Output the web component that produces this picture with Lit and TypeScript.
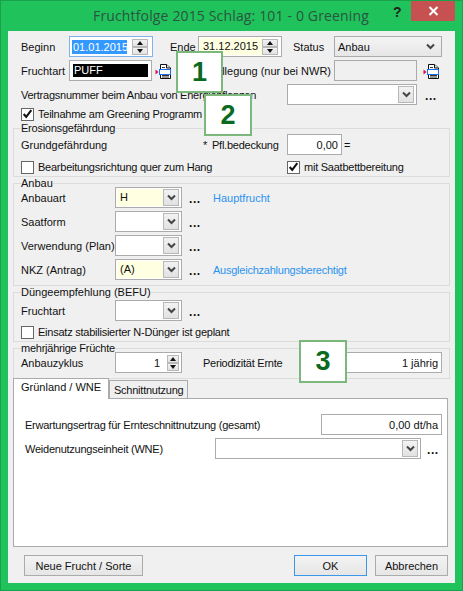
import { LitElement, html, css, svg } from "lit";
import { customElement } from "lit/decorators.js";

const chevron = svg`<svg width="9" height="7" viewBox="0 0 9 7"><path d="M1 1.5 L4.5 5 L8 1.5" fill="none" stroke="#444" stroke-width="2"/></svg>`;
const docIcon = html`<svg class="doc" width="17" height="17" viewBox="0 0 17 17">
  <path d="M5.5 1.5 H11.5 L15.5 5 V15.5 H5.5 Z" fill="#fff" stroke="#111"/>
  <path d="M11.5 1.5 V5 H15.5" fill="#ddd" stroke="#111"/>
  <path d="M7 4.5 H10 M7 12.5 H14 M7 14 H14" stroke="#333"/>
  <rect x="4.5" y="6.5" width="11" height="5" fill="#fff" stroke="#1a6ff0"/>
  <path d="M0.5 6.5 L3.5 9 L0.5 11.5 Z" fill="#e0103a"/>
</svg>`;
const check = html`<svg width="13" height="12" viewBox="0 0 13 12"><path d="M2 6 L5 9.5 L11 1.5" fill="none" stroke="#111" stroke-width="2.4"/></svg>`;

@customElement("app-root")
export class AppRoot extends LitElement {
  static styles = css`
    :host { display: block; width: 463px; height: 591px; overflow: hidden; font: 11px/14px "Liberation Sans", Arial, sans-serif; color: #111; }
    * { box-sizing: border-box; }
    .window { position: relative; width: 463px; height: 591px; background: #20c25c; border: 1px solid #17a34b; display: flex; flex-direction: column; }
    .titlebar { height: 30px; flex: none; display: flex; position: relative; }
    .title { position: absolute; left: 92px; top: 6px; font: 14px/18px "Open Sans", sans-serif; color: #2a5540; white-space: nowrap; letter-spacing: 0.15px; }
    .help { position: absolute; left: 392px; top: 1px; font: bold 14px/20px "Liberation Sans", sans-serif; color: #222; }
    .close { position: absolute; left: 410px; top: 0; width: 44px; height: 20px; background: #c75050; display: flex; align-items: center; justify-content: center; }
    .client { margin: 0 7px 7px; flex: 1; background: #f0f0f0; padding: 5px 0 0 0; display: flex; flex-direction: column; }
    .row { display: flex; align-items: center; height: 21px; white-space: nowrap; }
    .top { padding-left: 13px; margin-bottom: 3px; }
    .lab { flex: none; }
    .tight { letter-spacing: -0.24px; }
    .w48 { width: 48px; } .w28 { width: 28px; } .w41 { width: 41px; } .w266 { width: 266px; } .w94 { width: 94px; }
    .ml17 { margin-left: 17px; } .ml11 { margin-left: 11px; }
    .field { flex: none; height: 21px; border: 1px solid #ababab; background: #fff; display: flex; align-items: center; padding: 0 3px; }
    .f84 { width: 84px; } .f83 { width: 83px; } .f108 { width: 108px; } .f130 { width: 130px; } .f67 { width: 67px; } .f55 { width: 55px; } .f121 { width: 121px; } .f206 { width: 206px; } .f102 { width: 102px; }
    .right { justify-content: flex-end; }
    .off { background: #f0f0f0; }
    .focus { border-color: #7eb4ea; padding: 0 2px; }
    .yellow { background: #ffffe1; }
    .black { background: #000; color: #fff; height: 13px; width: 75px; padding-left: 1px; line-height: 13px; }
    .sel { background: #3399ff; color: #fff; height: 14px; line-height: 14px; width: 55px; padding-left: 1px; }
    .val { flex: 1; min-width: 0; height: 17px; line-height: 17px; }
    .combo { padding: 1px; }
    .combo .val { height: 17px; padding-left: 3px; }
    .combo.yl .val { background: #ffffe1; }
    .arrow { flex: none; width: 16px; height: 17px; border: 1px solid #b8b8b8; background: linear-gradient(#f2f2f2, #e2e2e2); display: flex; align-items: center; justify-content: center; margin-right: 1px; }
    .dropdown { background: linear-gradient(#f4f4f4, #e6e6e6); justify-content: space-between; padding: 0 3px; }
    .dropdown svg { margin-right: 3px; }
    .spin { flex: none; width: 16px; height: 16px; margin: 0 2px 0 auto; display: flex; flex-direction: column; }
    .spin div { flex: 1; border: 1px solid #b8b8b8; background: linear-gradient(#f2f2f2, #e2e2e2); display: flex; align-items: center; justify-content: center; }
    .f67 .spin { width: 12px; margin-right: 1px; }
    .tri-up { width: 0; height: 0; border: 3px solid transparent; border-top: 0; border-bottom: 4px solid #111; }
    .tri-dn { width: 0; height: 0; border: 3px solid transparent; border-bottom: 0; border-top: 4px solid #111; }
    .spinnum { flex: 1; text-align: right; padding-right: 7px; }
    .doc { flex: none; margin: 2px 0 0 3px; }
    .stil { width: 162px; text-align: right; flex: none; padding-right: 3px; }
    .doc2 { margin-left: 3px; display: flex; }
    .dots { flex: none; width: 11px; font-weight: bold; font-size: 12px; margin-left: 7px; letter-spacing: 0.6px; position: relative; top: 1px; line-height: 12px; }
    .d8 { margin-left: 8px; } .d6 { margin-left: 6px; }
    .cb { display: flex; align-items: center; height: 14px; white-space: nowrap; flex: none; }
    .box { width: 13px; height: 13px; flex: none; border: 1px solid #666; background: #fff; margin-right: 4px; display: flex; align-items: center; justify-content: center; }
    .cbtop { margin: -1px 0 0 13px; }
    .group { margin: 0 0 0 5px; width: 437px; border: 1px solid #dcdcdc; padding: 0 7px; flex: none; }
    .legend { margin-top: -7px; height: 13px; line-height: 13px; width: fit-content; background: #f0f0f0; }
    .g1 { margin-top: 7px; height: 49px; }
    .g2 { margin-top: 6px; height: 103px; }
    .g3 { margin-top: 6px; height: 50px; }
    .g4 { margin-top: 6px; height: 31px; }
    .g1 .legend + .row { margin-top: -1px; }
    .g1 .cbrow { height: 14px; margin-top: 5px; }
    .g2 .legend + .row { margin-top: -3px; }
    .g2 .row + .row { margin-top: 3px; }
    .g3 .legend + .row { margin-top: 1px; }
    .g3 .cb { margin-top: 4px; }
    .g4 .legend + .row { margin-top: -3px; }
    .w182 { width: 182px; } .w9 { width: 9px; } .w75 { width: 75px; }
    .eq { margin-left: 2px; }
    .link { color: #2b93f0; margin-left: 13px; }
    .per { width: 137px; margin-left: 21px; }
    .tabs { display: flex; align-items: flex-end; height: 21px; margin: -1px 0 -1px 5px; flex: none; position: relative; z-index: 1; white-space: nowrap; }
    .tab { height: 19px; border: 1px solid #ababab; padding: 0 4px; line-height: 17px; background: #f0f0f0; }
    .tab.on { height: 21px; width: 96px; background: #fff; border-bottom: 0; line-height: 17px; padding: 0 7px; }
    .tab.t2 { width: 79px; padding-top: 1px; }
    .panel { margin-left: 5px; width: 435px; height: 149px; border: 1px solid #ababab; background: #fff; padding: 15px 5px 0 11px; flex: none; }
    .panel .row + .row { margin-top: 3px; }
    .w296 { width: 296px; } .w190 { width: 190px; }
    .buttons { display: flex; margin: 8px 0 0 16px; width: 424px; flex: none; }
    .btn { height: 21px; flex: none; border: 1px solid #ababab; background: linear-gradient(#f3f3f3, #e6e6e6); display: flex; align-items: center; justify-content: center; }
    .b1 { width: 119px; } .b2 { width: 73px; margin-left: auto; border-color: #3c96ec; } .b3 { width: 73px; margin-left: 8px; }
    .badge { position: absolute; background: #fff; border: 2px solid #7bb87c; display: flex; align-items: center; justify-content: center; font: bold 27px/1 "Liberation Sans", sans-serif; color: #0b6a1e; z-index: 5; }
    .n1 { left: 175px; top: 50px; width: 47px; height: 42px; }
    .n2 { left: 203px; top: 93px; width: 48px; height: 42px; }
    .n3 { left: 298px; top: 339px; width: 48px; height: 43px; }
  `;

  private combo(w: string, val = "", yellow = false) {
    return html`<div class="field combo ${w} ${yellow ? "yl" : ""}"><div class="val">${val}</div><div class="arrow">${chevron}</div></div>`;
  }
  private spinner() {
    return html`<div class="spin"><div><span class="tri-up"></span></div><div><span class="tri-dn"></span></div></div>`;
  }
  private cb(label: string, on = false, cls = "") {
    return html`<div class="cb ${cls}"><span class="box">${on ? check : ""}</span><span class="tight">${label}</span></div>`;
  }
  private dots(cls = "") {
    return html`<span class="dots ${cls}">...</span>`;
  }

  render() {
    return html`
      <div class="window">
        <div class="titlebar">
          <div class="title">Fruchtfolge 2015 Schlag: 101 - 0 Greening</div>
          <div class="help">?</div>
          <div class="close"><svg width="11" height="10" viewBox="0 0 11 10"><path d="M1.5 1 L9.5 9 M9.5 1 L1.5 9" stroke="#fff" stroke-width="2"/></svg></div>
        </div>
        <div class="client">
          <div class="row top">
            <span class="lab w48">Beginn</span>
            <div class="field f84 focus"><div class="sel">01.01.2015</div>${this.spinner()}</div>
            <span class="lab w28 ml17">Ende</span>
            <div class="field f84 combo"><div class="val yellow">31.12.2015</div>${this.spinner()}</div>
            <span class="lab w41 ml11">Status</span>
            <div class="field f108 dropdown"><span>Anbau</span>${chevron}</div>
          </div>
          <div class="row top">
            <span class="lab w48">Fruchtart</span>
            <div class="field f83"><div class="black">PUFF</div></div>
            ${docIcon}
            <span class="lab stil">Stilllegung (nur bei NWR)</span>
            <div class="field f83 off"></div>
            <span class="doc2">${docIcon}</span>
          </div>
          <div class="row top">
            <span class="lab w266 tight">Vertragsnummer beim Anbau von Energiepflanzen</span>
            ${this.combo("f130")}
            ${this.dots("d8")}
          </div>
          ${this.cb("Teilnahme am Greening Programm", true, "cbtop")}

          <div class="group g1">
            <div class="legend tight">Erosionsgefährdung</div>
            <div class="row">
              <span class="lab w182">Grundgefährdung</span>
              <span class="lab w9">*</span>
              <span class="lab w75 tight">Pfl.bedeckung</span>
              <div class="field f55 right">0,00</div>
              <span class="eq">=</span>
            </div>
            <div class="row cbrow">
              ${this.cb("Bearbeitungsrichtung quer zum Hang", false, "w266")}
              ${this.cb("mit Saatbettbereitung", true)}
            </div>
          </div>

          <div class="group g2">
            <div class="legend">Anbau</div>
            <div class="row"><span class="lab w94">Anbauart</span>${this.combo("f67", "H", true)}${this.dots()}<span class="link">Hauptfrucht</span></div>
            <div class="row"><span class="lab w94">Saatform</span>${this.combo("f67")}${this.dots()}</div>
            <div class="row"><span class="lab w94">Verwendung (Plan)</span>${this.combo("f67")}${this.dots()}</div>
            <div class="row"><span class="lab w94">NKZ (Antrag)</span>${this.combo("f67", "(A)", true)}${this.dots()}<span class="link tight">Ausgleichzahlungsberechtigt</span></div>
          </div>

          <div class="group g3">
            <div class="legend">Düngeempfehlung (BEFU)</div>
            <div class="row"><span class="lab w94">Fruchtart</span>${this.combo("f67")}${this.dots()}</div>
            ${this.cb("Einsatz stabilisierter N-Dünger ist geplant")}
          </div>

          <div class="group g4">
            <div class="legend tight">mehrjährige Früchte</div>
            <div class="row">
              <span class="lab w94">Anbauzyklus</span>
              <div class="field f67 combo"><div class="spinnum">1</div>${this.spinner()}</div>
              <span class="lab per tight">Periodizität Ernte</span>
              <div class="field f102 right">1 jährig</div>
            </div>
          </div>

          <div class="tabs">
            <div class="tab on">Grünland / WNE</div>
            <div class="tab t2 tight">Schnittnutzung</div>
          </div>
          <div class="panel">
            <div class="row"><span class="lab w296 tight">Erwartungsertrag für Ernteschnittnutzung (gesamt)</span><div class="field f121 right">0,00 dt/ha</div></div>
            <div class="row"><span class="lab w190 tight">Weidenutzungseinheit (WNE)</span>${this.combo("f206")}${this.dots("d6")}</div>
          </div>

          <div class="buttons">
            <div class="btn b1">Neue Frucht / Sorte</div>
            <div class="btn b2">OK</div>
            <div class="btn b3">Abbrechen</div>
          </div>
        </div>
        <div class="badge n1">1</div>
        <div class="badge n2">2</div>
        <div class="badge n3">3</div>
      </div>
    `;
  }
}
